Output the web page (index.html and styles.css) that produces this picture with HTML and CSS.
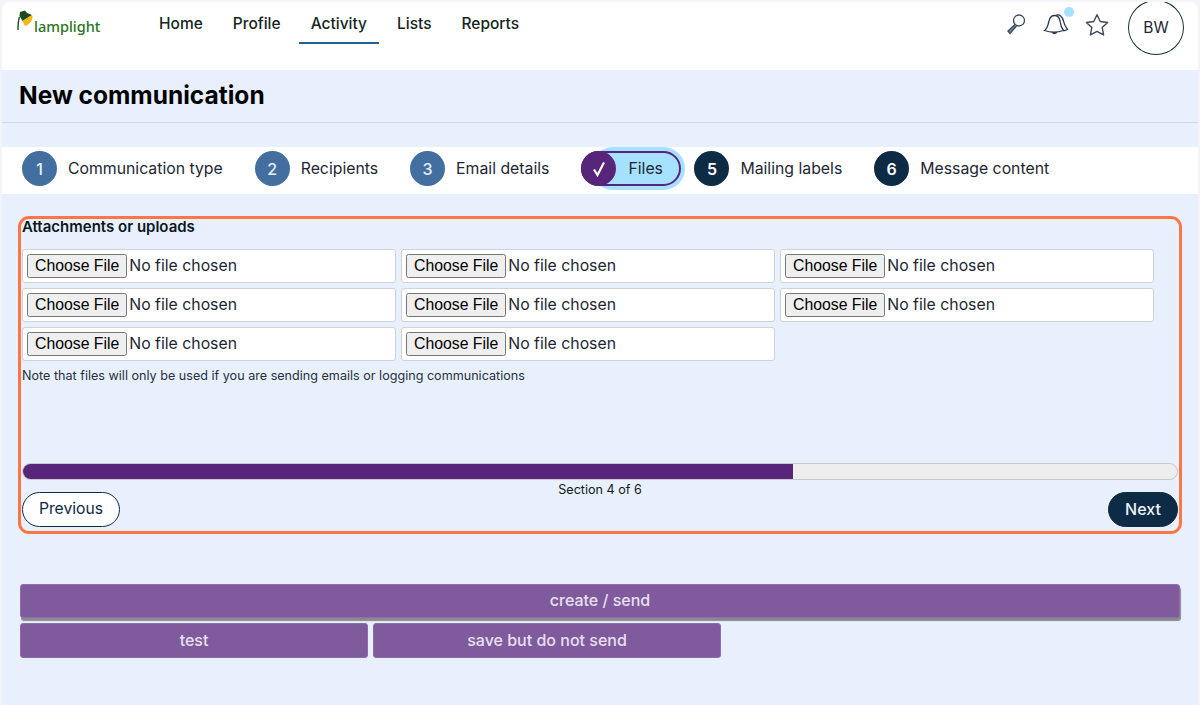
FILE: index.html
```html
<!DOCTYPE html>
<html lang="en">
<head>
  <meta charset="UTF-8" />
  <title>New communication</title>
  <link rel="stylesheet" href="styles.css">
</head>
<body>
  <div class="page">
    <header class="topbar">
      <a class="logo" href="#">
        <svg class="logo-lamp" width="18" height="24" viewBox="0 0 18 24">
          <path d="M3 2 L8 0.500 L10 3 L15 5 L5.500 11 L2.500 6 Z" fill="#1d4a22"/>
          <path d="M15 5 C17 8 13 15 8 16 L5.500 11 Z" fill="#f2b90f"/>
          <path d="M2.500 7 C1 11 1 15 1 20" fill="none" stroke="#1d4a22" stroke-width="1.4"/>
        </svg>
        <span>lamplight</span>
      </a>
      <nav class="mainnav">
        <a href="#">Home</a>
        <a href="#">Profile</a>
        <a href="#" class="active">Activity</a>
        <a href="#">Lists</a>
        <a href="#">Reports</a>
      </nav>
      <div class="tools">
        <svg width="24" height="24" viewBox="0 0 24 24" fill="none" stroke="#3c4a5c" stroke-width="1.3">
          <circle cx="15" cy="8.500" r="5.500"/>
          <path d="M11 12.500 L4 19 L6 21.500 L12.500 14" fill="#7d8794"/>
        </svg>
        <span class="bell">
          <svg width="26" height="24" viewBox="0 0 26 24" fill="none" stroke="#26384e" stroke-width="1.3">
            <path d="M1.500 18.500 C5 16 5 12 6 9 C7 5 9 3.500 11.500 3.500 C14.500 3.500 16.500 6 17 9 C17.500 13 18.500 16 20.500 18.500 C15 20.500 7 20.500 1.500 18.500 Z"/>
            <path d="M12.500 3.500 C16.500 1.500 19.500 5 20.500 9 C21 12 22.500 15 24.500 17.500 L20.500 19"/>
            <path d="M9.500 20 C10 22 13 22 13.500 20"/>
          </svg>
          <i class="dot"></i>
        </span>
        <svg width="26" height="26" viewBox="0 0 24 24" fill="none" stroke="#3c4a5c" stroke-width="1.3" stroke-linejoin="round">
          <path d="M12 2.500 L15 8.800 L21.800 9.700 L16.800 14.400 L18.100 21.200 L12 17.900 L5.900 21.200 L7.200 14.400 L2.200 9.700 L9 8.800 Z"/>
        </svg>
        <div class="avatar">BW</div>
      </div>
    </header>

    <div class="titlebar">
      <h1>New communication</h1>
    </div>

    <div class="steps">
      <div class="step"><span class="num">1</span>Communication type</div>
      <div class="step"><span class="num">2</span>Recipients</div>
      <div class="step"><span class="num">3</span>Email details</div>
      <div class="step current">
        <span class="num">
          <svg width="14" height="16" viewBox="0 0 14 16" fill="none" stroke="#ffffff" stroke-width="2.200">
            <path d="M2 8.500 L5.500 14 L12 1.500"/>
          </svg>
        </span>
        Files
      </div>
      <div class="step todo"><span class="num">5</span>Mailing labels</div>
      <div class="step todo"><span class="num">6</span>Message content</div>
    </div>

    <section class="panel">
      <h2>Attachments or uploads</h2>
      <div class="files">
        <div class="filebox"><input type="file"></div>
        <div class="filebox"><input type="file"></div>
        <div class="filebox"><input type="file"></div>
        <div class="filebox"><input type="file"></div>
        <div class="filebox"><input type="file"></div>
        <div class="filebox"><input type="file"></div>
        <div class="filebox"><input type="file"></div>
        <div class="filebox"><input type="file"></div>
      </div>
      <p class="note">Note that files will only be used if you are sending emails or logging communications</p>
      <div class="progress"><div class="progress-fill" style="width: 66.8%"></div></div>
      <div class="section-count">Section 4 of 6</div>
      <div class="pager">
        <button class="btn-prev">Previous</button>
        <button class="btn-next">Next</button>
      </div>
    </section>

    <div class="actions">
      <button class="action action-main">create / send</button>
      <div class="action-row">
        <button class="action">test</button>
        <button class="action">save but do not send</button>
      </div>
    </div>
  </div>
</body>
</html>
```

FILE: styles.css
```css
* {
  box-sizing: border-box;
}

html, body {
  height: 100%;
}

body {
  margin: 0;
  font-family: 'Inter', 'Liberation Sans', sans-serif;
  background: #f3f3f8;
  color: #0f1a24;
  overflow: hidden;
}

.page {
  height: 705px;
  margin: 2px 2px 0 2px;
  background: #e8f0fe;
  border-radius: 8px 8px 0 0;
  overflow: hidden;
}

.topbar {
  height: 68px;
  background: #ffffff;
  display: flex;
  align-items: flex-start;
  padding-right: 14px;
}

.logo {
  display: flex;
  width: 145px;
  padding: 8px 0 0 15px;
  color: #2a741d;
  text-decoration: none;
  font-family: 'Noto Sans', sans-serif;
  font-size: 14.5px;
  font-weight: 500;
}

.logo span {
  margin: 6px 0 0 -1px;
}

.mainnav {
  display: flex;
  gap: 6px;
}

.mainnav a {
  display: block;
  height: 42px;
  padding: 12px 12px 0;
  color: #15261b;
  font-size: 15.5px;
  font-weight: 500;
  text-decoration: none;
}

.mainnav a.active {
  border-bottom: 2px solid #1f5f99;
}

.tools {
  margin-left: auto;
  display: flex;
  align-items: flex-start;
  gap: 15px;
  padding-top: 10px;
}

.bell {
  position: relative;
  display: block;
}

.dot {
  position: absolute;
  top: -5px;
  right: -5px;
  width: 10px;
  height: 10px;
  border-radius: 50%;
  background: #a6e1ff;
}

.avatar {
  width: 56px;
  height: 55px;
  margin: -12px 0 0 3px;
  border: 1px solid #15361f;
  border-radius: 50%;
  display: flex;
  align-items: center;
  justify-content: center;
  font-size: 15.5px;
  color: #1c2733;
}

.titlebar {
  height: 53px;
  border-bottom: 1px solid #d5d7dc;
  padding: 11px 0 0 17px;
}

h1 {
  margin: 0;
  font-size: 24.5px;
  line-height: 29px;
  font-weight: 700;
  color: #000;
}

.steps {
  isolation: isolate;
  height: 47px;
  margin-top: 24px;
  background: #ffffff;
  display: flex;
  align-items: flex-start;
  padding: 4px 0 0 20px;
}

.step {
  display: flex;
  align-items: center;
  gap: 11px;
  height: 35px;
  margin-right: 32px;
  font-size: 15.8px;
  color: #1c2733;
  white-space: nowrap;
}

.num {
  width: 35px;
  height: 35px;
  border-radius: 50%;
  background: #426f9f;
  color: #e8eef5;
  display: flex;
  align-items: center;
  justify-content: center;
  font-size: 16px;
  font-weight: 500;
}

.step.todo .num {
  background: #0d2b45;
  color: #fff;
  font-weight: 600;
}

.step.current {
  position: relative;
  width: 100px;
  margin-right: 13px;
  gap: 12px;
  background: #a6e1ff;
  border: 2px solid #57267a;
  border-radius: 18px;
}

.step.current::before {
  content: "";
  position: absolute;
  z-index: -1;
  top: -6px;
  bottom: -6px;
  left: 8px;
  right: -6px;
  border-radius: 22px;
  background: #a6e1ff;
}

.step.current .num {
  margin-left: -2px;
  flex-shrink: 0;
  background: #57267a;
}

.panel {
  height: 318px;
  margin: 22px 16px 0;
  border: 3px solid #ff7546;
  border-radius: 11px;
  padding: 0 1px;
}

h2 {
  margin: -1px 0 0;
  font-size: 15px;
  line-height: 18px;
  font-weight: 600;
  color: #0c1620;
}

.files {
  display: grid;
  grid-template-columns: repeat(3, 374px);
  gap: 5px;
  margin-top: 13px;
}

.filebox {
  height: 34px;
  background: #ffffff;
  border: 1px solid #d0d2d6;
  border-radius: 3px;
  padding: 4px;
  display: flex;
  align-items: center;
}

.filebox input {
  font-family: inherit;
  font-size: 15.8px;
  color: #1c2733;
}

.filebox input::file-selector-button {
  padding: 1px 6px;
  margin-right: 2px;
}

.note {
  margin: 7px 0 0;
  font-size: 12.6px;
  line-height: 15px;
  color: #27323c;
}

.progress {
  height: 17px;
  margin-top: 80px;
  background: #eeeeee;
  border: 1px solid #c8c8c8;
  border-radius: 9px;
  overflow: hidden;
}

.progress-fill {
  height: 17px;
  margin: -1px 0 0 -1px;
  background: #57267a;
}

.section-count {
  margin-top: 2px;
  text-align: center;
  font-size: 12.6px;
  line-height: 15px;
}

.pager {
  display: flex;
  justify-content: space-between;
  margin-top: -5px;
}

.btn-prev, .btn-next {
  height: 35px;
  padding: 0 0 2px;
  border-radius: 18px;
  font-family: inherit;
  font-size: 15.7px;
}

.btn-prev {
  width: 98px;
  background: #ffffff;
  border: 1px solid #0d2b45;
  color: #0d2b45;
}

.btn-next {
  width: 70px;
  background: #0d2b45;
  border: 1px solid #0d2b45;
  color: #eef2f6;
  font-size: 16px;
  font-weight: 500;
}

.actions {
  margin: 50px 18px 0;
}

.action {
  width: 348px;
  height: 35px;
  padding: 0 0 2px;
  background: #7f5a9d;
  border: 1px solid #8d6dab;
  border-radius: 3px;
  color: #e8e0ef;
  font-family: inherit;
  font-size: 16px;
  font-weight: 500;
}

.action-main {
  display: block;
  width: 100%;
  height: 34px;
  box-shadow: 1px 3px 1px #8a8a8a;
}

.action-row {
  display: flex;
  gap: 5px;
  margin-top: 5px;
}
```
